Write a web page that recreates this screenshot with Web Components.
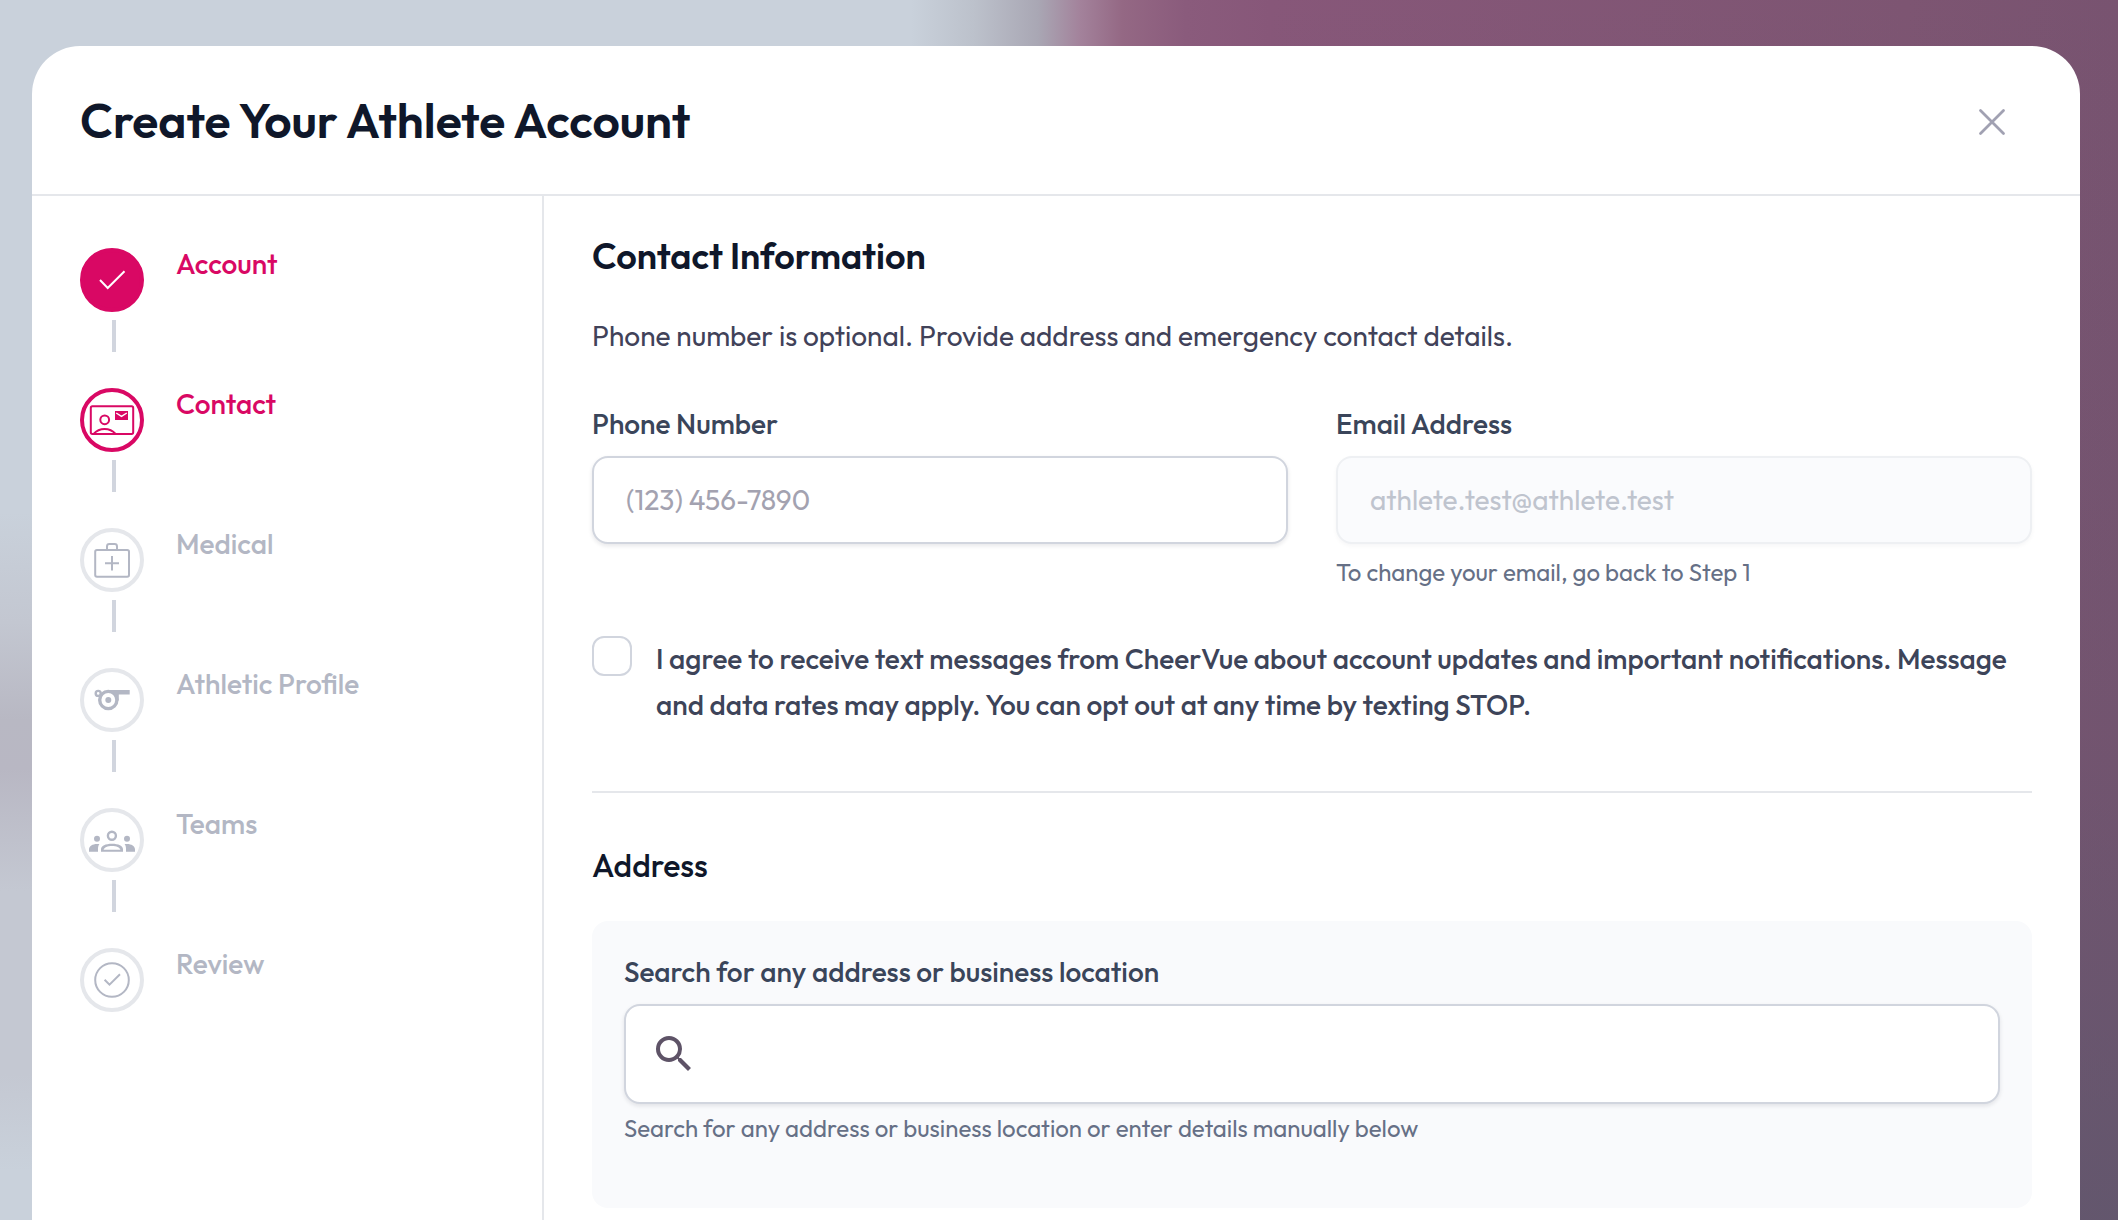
<!DOCTYPE html>
<html lang="en">
<head>
<meta charset="utf-8">
<title>Create Your Athlete Account</title>
<style>
    body {
        margin: 0;
        font-family: Outfit, Lato, sans-serif;
        font-size: 28px;
        line-height: 40px;
        color: #0f172a;
        background:
            linear-gradient(180deg, #c9d1db 42%, #c3c7d1 51%, #b8b8c3 59%, #b8b7c3 63%, #c4c8d2 73%, #c4c8d2 88%, #c9d1db 96%) left / 40% 100% no-repeat,
            linear-gradient(180deg, transparent, rgba(90, 88, 108, 0.2) 60%, rgba(90, 88, 108, 0.7)) right / 40% 100% no-repeat,
            linear-gradient(90deg, #c9d1db 43%, #bcc1cb 46%, #a9a7b4 49%, #a3829b 51%, #946884 53%, #8a5b7c 56%, #875779 60%, #7d5572 90%, #785370);
    }
</style>
</head>
<body>

<account-dialog heading="Create Your Athlete Account">
    <step-list slot="steps">
        <step-item icon="check" state="done">Account</step-item>
        <step-item icon="contact" state="current">Contact</step-item>
        <step-item icon="medical">Medical</step-item>
        <step-item icon="whistle">Athletic Profile</step-item>
        <step-item icon="teams">Teams</step-item>
        <step-item icon="review">Review</step-item>
    </step-list>
    <contact-form></contact-form>
</account-dialog>

<script>
const ICONS = {
    check: `<path d="M20 32l7.700 8L44.500 23.300" fill="none" stroke="currentColor" stroke-width="2"/>`,
    contact: `
        <g fill="none" stroke="currentColor" stroke-width="2">
            <rect x="10.8" y="18.3" width="42.4" height="27.6" rx="1.6"/>
            <circle cx="24.7" cy="31.8" r="4.4"/>
            <path d="M13.6 46c3-3.4 7-5 11-5s8 1.6 11 5"/>
        </g>
        <path d="M35 23h13v9H35z" fill="currentColor"/>
        <path d="M36.2 25l5.3 3.4 5.3-3.4" fill="none" stroke="#fff" stroke-width="1.4"/>`,
    medical: `
        <g fill="none" stroke="currentColor" stroke-width="2">
            <rect x="15.2" y="22" width="33.8" height="26.8" rx="1.8"/>
            <path d="M27 22v-3.6q0-2.4 2.4-2.4h5.2q2.4 0 2.4 2.4V22M32 28v14.6M25 35.3h14"/>
        </g>`,
    whistle: `
        <circle cx="28.3" cy="32" r="8.6" fill="none" stroke="currentColor" stroke-width="3.4"/>
        <circle cx="28.3" cy="32" r="3" fill="currentColor"/>
        <circle cx="18.2" cy="25.4" r="2.5" fill="none" stroke="currentColor" stroke-width="2.4"/>
        <path d="M28 22h21.7v4.5H38.8v6h-2.4l-3-7.2z" fill="currentColor"/>`,
    teams: `
        <circle cx="31.9" cy="27.7" r="4" fill="none" stroke="currentColor" stroke-width="2.4"/>
        <g fill="currentColor">
            <circle cx="17" cy="30.7" r="3"/>
            <circle cx="47" cy="30.7" r="3"/>
            <path d="M9 43.7v-2.2c0-3.5 3.5-5.6 8-5.6h2.4c-1 1.3-1.4 3-1.4 4.6v3.2z"/>
            <path d="M55 43.7v-2.2c0-3.5-3.5-5.6-8-5.6h-2.4c1 1.3 1.4 3 1.4 4.6v3.2z"/>
            <path fill-rule="evenodd" d="M21 43.7v-2.5c0-3.4 4.5-5.5 11-5.5s11 2.1 11 5.5v2.5zM23.6 41.7h16.8c-.6-2.4-4-3.8-8.4-3.8s-7.8 1.4-8.4 3.8z"/>
        </g>`,
    review: `
        <g fill="none" stroke="currentColor" stroke-width="2">
            <circle cx="32" cy="32" r="16.8"/>
            <path d="M24.6 31.7l4.9 4.9L40 26.3"/>
        </g>`
};

class AccountDialog extends HTMLElement {
    constructor() {
        super();
        this.attachShadow({ mode: 'open' });
    }

    connectedCallback() {
        this.shadowRoot.innerHTML = `
        <style>
            :host {
                display: flex;
                flex-direction: column;
                box-sizing: border-box;
                height: 100vh;
                padding: 46px 38px 0 32px;
            }

            section {
                flex: 1;
                min-height: 0;
                display: flex;
                flex-direction: column;
                background: #fff;
                border-radius: 48px 48px 0 0;
                overflow: hidden;
            }

            header {
                display: flex;
                align-items: flex-start;
                justify-content: space-between;
                padding: 36px 48px 32px;
                border-bottom: 2px solid #e5e7eb;
            }

            h1 {
                margin: 0;
                font-size: 48px;
                line-height: 76px;
                font-weight: 600;
            }

            button {
                display: flex;
                align-items: center;
                justify-content: center;
                width: 80px;
                height: 80px;
                padding: 0;
                border: 0;
                background: none;
                color: #a1a1b2;
                cursor: pointer;
            }

            .body {
                flex: 1;
                min-height: 0;
                display: grid;
                grid-template-columns: 512px minmax(0, 1fr);
            }

            aside {
                box-sizing: border-box;
                padding: 52px 48px;
                border-right: 2px solid #e5e7eb;
            }

            main {
                padding: 36px 48px 0;
            }
        </style>
        <section role="dialog" aria-labelledby="title">
            <header>
                <h1 id="title">${this.getAttribute('heading')}</h1>
                <button type="button" aria-label="Close">
                    <svg width="32" height="32" viewBox="0 0 32 32" fill="none" stroke="currentColor" stroke-width="2.8" stroke-linecap="round">
                        <path d="M4.500 4.500l23 23M27.500 4.500l-23 23"/>
                    </svg>
                </button>
            </header>
            <div class="body">
                <aside><slot name="steps"></slot></aside>
                <main><slot></slot></main>
            </div>
        </section>
        `;
    }
}

class StepList extends HTMLElement {
    constructor() {
        super();
        this.attachShadow({ mode: 'open' });
        this.shadowRoot.innerHTML = `
        <style>
            :host {
                display: flex;
                flex-direction: column;
                gap: 36px;
            }
        </style>
        <slot></slot>
        `;
    }
}

class StepItem extends HTMLElement {
    constructor() {
        super();
        this.attachShadow({ mode: 'open' });
    }

    connectedCallback() {
        this.shadowRoot.innerHTML = `
        <style>
            :host {
                display: flex;
                gap: 32px;
                color: #b3b7c4;
                font-weight: 500;
            }

            :host([state]) {
                color: #d90864;
            }

            .track {
                display: flex;
                flex-direction: column;
                align-items: center;
                gap: 8px;
            }

            .dot {
                box-sizing: border-box;
                width: 64px;
                height: 64px;
                border: 4px solid #e5e7eb;
                border-radius: 50%;
            }

            :host([state]) .dot {
                border-color: #d90864;
            }

            :host([state="done"]) .dot {
                background: #d90864;
                color: #fff;
            }

            svg {
                display: block;
            }

            .line {
                width: 4px;
                height: 32px;
                margin-left: 4px;
                background: #d1d5de;
            }

            :host(:last-child) .line {
                display: none;
            }

            .label {
                line-height: 32px;
            }
        </style>
        <div class="track">
            <div class="dot">
                <svg width="56" height="56" viewBox="4 4 56 56" aria-hidden="true">${ICONS[this.getAttribute('icon')]}</svg>
            </div>
            <div class="line"></div>
        </div>
        <div class="label"><slot></slot></div>
        `;
    }
}

class TextField extends HTMLElement {
    constructor() {
        super();
        this.attachShadow({ mode: 'open' });
    }

    connectedCallback() {
        const type = this.getAttribute('type') || 'text';
        const help = this.getAttribute('help');
        this.shadowRoot.innerHTML = `
        <style>
            :host {
                display: flex;
                flex-direction: column;
            }

            label {
                margin-bottom: 12px;
                color: #3a455a;
                font-weight: 500;
            }

            .box {
                display: flex;
                align-items: center;
                box-sizing: border-box;
                height: 88px;
                padding: 0 32px;
                background: #fff;
                border: 2px solid #d1d5de;
                border-radius: 16px;
                box-shadow: 0 2px 4px rgba(15, 23, 42, 0.1);
            }

            :host([type="search"]) .box {
                height: 100px;
                padding: 0 24px;
                gap: 12px;
            }

            :host([disabled]) .box {
                background: #fafbfd;
                border-color: #eef0f3;
                box-shadow: 0 2px 4px rgba(15, 23, 42, 0.04);
            }

            input {
                flex: 1;
                min-width: 0;
                padding: 0;
                border: 0;
                outline: 0;
                background: none;
                appearance: none;
                font: inherit;
                color: inherit;
            }

            input:disabled {
                color: #bfc4ce;
            }

            input::placeholder {
                color: #a3a2b0;
                opacity: 1;
            }

            small {
                margin-top: 12px;
                font-size: 24px;
                line-height: 32px;
                color: #667086;
            }

            :host([type="search"]) small {
                margin-top: 8px;
            }
        </style>
        <label for="input">${this.getAttribute('label')}</label>
        <div class="box">
            <slot></slot>
            <input id="input" type="${type}"
                placeholder="${this.getAttribute('placeholder') || ''}"
                value="${this.getAttribute('value') || ''}"
                ${this.hasAttribute('disabled') ? 'disabled' : ''}>
        </div>
        ${help ? `<small>${help}</small>` : ''}
        `;
    }
}

class ConsentCheck extends HTMLElement {
    constructor() {
        super();
        this.attachShadow({ mode: 'open' });
        this.shadowRoot.innerHTML = `
        <style>
            :host {
                display: block;
            }

            label {
                display: flex;
                align-items: flex-start;
                gap: 24px;
                line-height: 46px;
                font-weight: 500;
                color: #3d4459;
            }

            input {
                flex: none;
                appearance: none;
                box-sizing: border-box;
                width: 40px;
                height: 40px;
                margin: 0;
                background: #fff;
                border: 2px solid #d1d5de;
                border-radius: 12px;
            }

            input:checked {
                background: #d90864;
            }
        </style>
        <label><input type="checkbox"><span><slot></slot></span></label>
        `;
    }
}

class ContactForm extends HTMLElement {
    constructor() {
        super();
        this.attachShadow({ mode: 'open' });
        this.shadowRoot.innerHTML = `
        <style>
            :host {
                display: block;
            }

            h2, h3, p {
                margin: 0;
            }

            h2 {
                font-size: 36px;
                line-height: 48px;
                font-weight: 600;
            }

            h3 {
                font-size: 32px;
                font-weight: 500;
            }

            p {
                margin: 36px 0 48px;
                color: #414259;
            }

            .row {
                display: grid;
                grid-template-columns: 1fr 1fr;
                gap: 48px;
                margin-bottom: 48px;
            }

            hr {
                margin: 63px 0 52px;
                border: 0;
                border-top: 2px solid #e5e7eb;
            }

            .panel {
                margin-top: 36px;
                padding: 31px 32px 64px;
                background: #f9fafc;
                border-radius: 16px;
            }

            svg {
                color: #5e5367;
            }
        </style>
        <form>
            <h2>Contact Information</h2>
            <p>Phone number is optional. Provide address and emergency contact details.</p>
            <div class="row">
                <text-field type="tel" label="Phone Number" placeholder="(123) 456-7890"></text-field>
                <text-field type="email" label="Email Address" value="athlete.test@athlete.test" disabled
                    help="To change your email, go back to Step 1"></text-field>
            </div>
            <consent-check>I agree to receive text messages from CheerVue about account updates and important notifications. Message and data rates may apply. You can opt out at any time by texting STOP.</consent-check>
            <hr>
            <h3>Address</h3>
            <div class="panel">
                <text-field type="search" label="Search for any address or business location"
                    help="Search for any address or business location or enter details manually below">
                    <svg width="48" height="48" viewBox="0 0 24 24" fill="currentColor" aria-hidden="true">
                        <path d="M15.500 14h-.79l-.28-.27A6.471 6.471 0 0 0 16 9.500 6.500 6.500 0 1 0 9.500 16c1.610 0 3.090-.59 4.230-1.570l.27.28v.79l5 4.990L20.490 19l-4.990-5zm-6 0C7.010 14 5 11.990 5 9.500S7.010 5 9.500 5 14 7.010 14 9.500 11.990 14 9.500 14z"/>
                    </svg>
                </text-field>
            </div>
        </form>
        `;
    }
}

customElements.define('step-item', StepItem);
customElements.define('step-list', StepList);
customElements.define('text-field', TextField);
customElements.define('consent-check', ConsentCheck);
customElements.define('contact-form', ContactForm);
customElements.define('account-dialog', AccountDialog);
</script>
</body>
</html>
